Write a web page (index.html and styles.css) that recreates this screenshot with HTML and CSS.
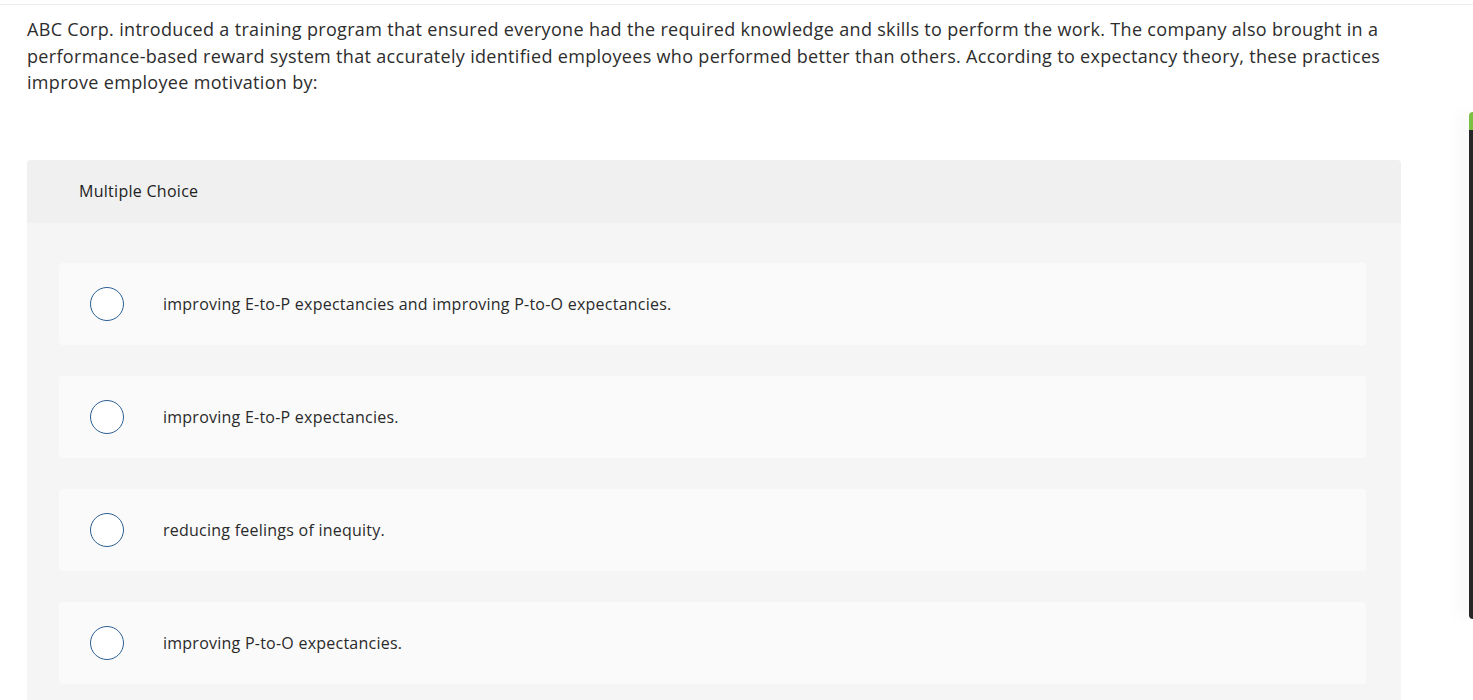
FILE: index.html
```html
<!DOCTYPE html>
<html lang="en">
<head>
<meta charset="utf-8">
<title>Multiple Choice</title>
<link rel="stylesheet" href="styles.css">
</head>
<body>
<div class="topline"></div>
<main class="page">
  <p class="question">ABC Corp. introduced a training program that ensured everyone had the required knowledge and skills to perform the work. The company also brought in a performance-based reward system that accurately identified employees who performed better than others. According to expectancy theory, these practices improve employee motivation by:</p>
  <section class="card">
    <div class="card-head">Multiple Choice</div>
    <div class="card-body">
      <label class="option"><span class="radio"></span><span class="opt-text">improving E-to-P expectancies and improving P-to-O expectancies.</span></label>
      <label class="option"><span class="radio"></span><span class="opt-text">improving E-to-P expectancies.</span></label>
      <label class="option"><span class="radio"></span><span class="opt-text">reducing feelings of inequity.</span></label>
      <label class="option"><span class="radio"></span><span class="opt-text">improving P-to-O expectancies.</span></label>
    </div>
  </section>
</main>
<div class="side-tab"></div>
</body>
</html>
```

FILE: styles.css
```css
html, body {
  margin: 0;
  padding: 0;
  background: #ffffff;
  overflow: hidden;
}
body {
  font-family: "Open Sans", "Liberation Sans", sans-serif;
  color: #333333;
  height: 700px;
}
.topline {
  height: 4px;
  border-bottom: 1px solid #ebebeb;
}
.page {
  padding: 0 72px 0 27px;
}
.question {
  margin: 11px 0 0 0;
  font-size: 18px;
  line-height: 26.5px;
  letter-spacing: 0.32px;
  color: #2d2d2d;
}
.card {
  margin-top: 64px;
  width: 1374px;
  background: #f5f5f5;
  border-radius: 4px 4px 0 0;
}
.card-head {
  height: 63px;
  display: flex;
  align-items: center;
  padding-left: 52px;
  background: #f0f0f0;
  border-radius: 4px 4px 0 0;
  font-size: 16px;
  letter-spacing: 0.28px;
  color: #222;
}
.card-body {
  padding: 40px 35px 16px 32px;
  display: flex;
  flex-direction: column;
  gap: 31px;
}
.option {
  height: 82px;
  background: #fafafa;
  border-radius: 4px;
  display: flex;
  align-items: center;
  padding-left: 31px;
}
.radio {
  width: 32px;
  height: 32px;
  border: 1.5px solid #2b5f93;
  border-radius: 50%;
  background: #fff;
  flex: none;
}
.opt-text {
  margin-left: 39px;
  font-size: 16px;
  letter-spacing: 0.24px;
  color: #2a2a2a;
}
.side-tab {
  position: absolute;
  top: 112px;
  right: 0;
  width: 4px;
  height: 507px;
  box-sizing: border-box;
  background: #262626;
  border-top: 18px solid #7ac143;
  border-radius: 5px 0 0 5px;
  box-shadow: -6px 0 16px rgba(0,0,0,0.10);
}
```
